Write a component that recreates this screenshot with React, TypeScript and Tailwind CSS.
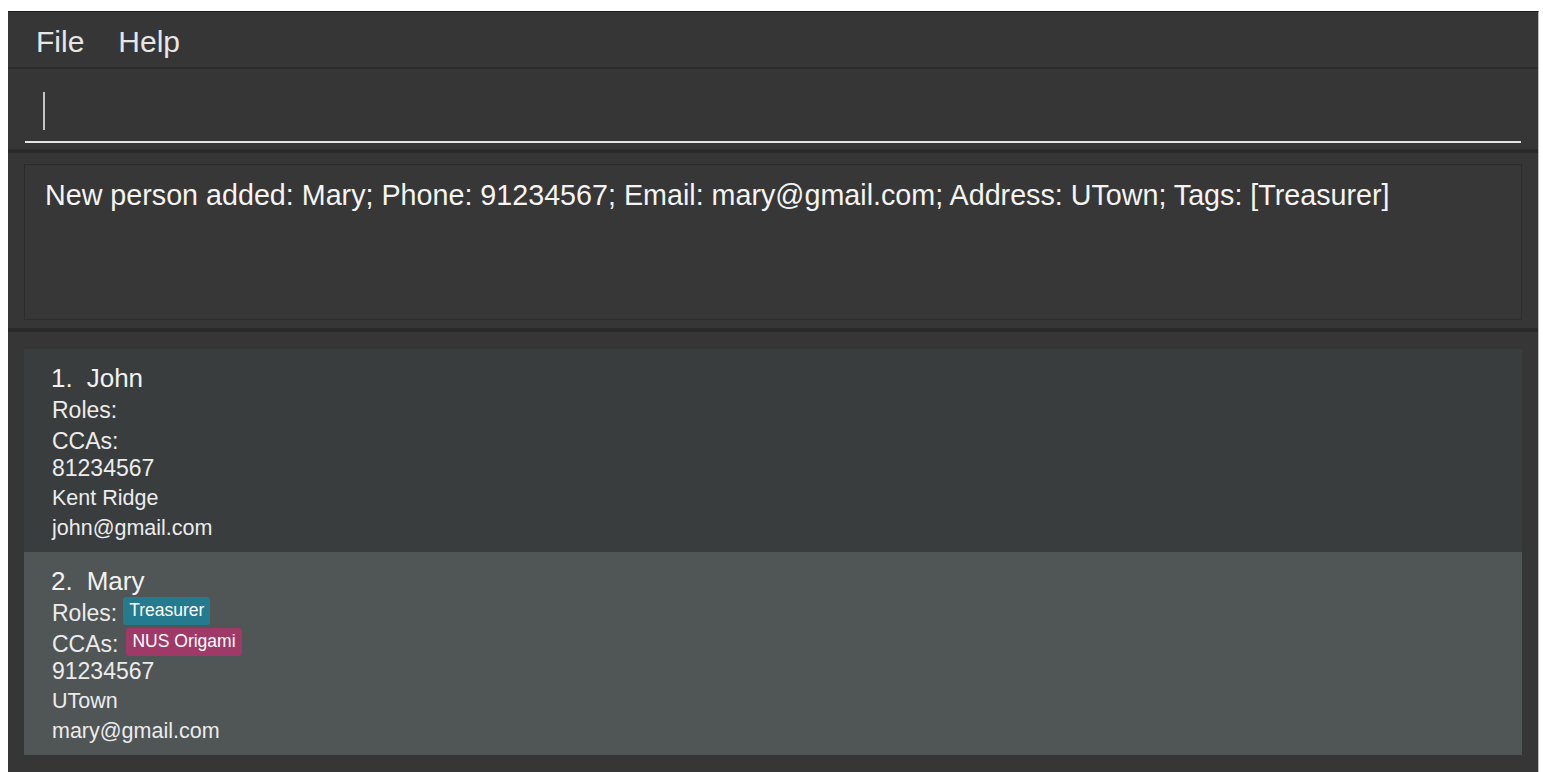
import React from 'react';

interface Person {
  index: number;
  name: string;
  role?: string;
  cca?: string;
  phone: string;
  address: string;
  email: string;
  bg: string;
}

const people: Person[] = [
  { index: 1, name: 'John', phone: '81234567', address: 'Kent Ridge', email: 'john@gmail.com', bg: 'bg-[#393d3e]' },
  {
    index: 2,
    name: 'Mary',
    role: 'Treasurer',
    cca: 'NUS Origami',
    phone: '91234567',
    address: 'UTown',
    email: 'mary@gmail.com',
    bg: 'bg-[#505556]',
  },
];

function PersonCard({ person }: { person: Person }) {
  return (
    <div className={`h-[203px] pl-[28px] pt-[13px] pb-[11px] flex flex-col text-[#ececec] ${person.bg}`}>
      {/* name */}
      <div className="h-[32px] flex items-center text-[26px] leading-none text-[#f2f2f2] -ml-[1px]">
        <span>{person.index}.</span>
        <span className="ml-[14px]">{person.name}</span>
      </div>
      <div className="h-[32px] flex items-center text-[23px] leading-none">
        <span>Roles:</span>
        {person.role && (
          <span className="ml-[6px] mb-[5px] h-[28px] px-[6px] rounded-[3px] bg-[#257b8e] text-[17.5px] text-white flex items-center">
            {person.role}
          </span>
        )}
      </div>
      <div className="h-[30px] flex items-center text-[23px] leading-none">
        <span>CCAs:</span>
        {person.cca && (
          <span className="ml-[8px] mb-[5px] h-[28px] px-[6px] rounded-[3px] bg-[#9f3968] text-[17.5px] text-white flex items-center">
            {person.cca}
          </span>
        )}
      </div>
      <div className="h-[25px] flex items-center text-[23px] leading-none">{person.phone}</div>
      <div className="h-[36px] flex items-center text-[21.5px] leading-none">{person.address}</div>
      <div className="h-[24px] flex items-center text-[21.5px] leading-none">{person.email}</div>
    </div>
  );
}

export default function App() {
  return (
    <div className="min-h-screen bg-white font-['Liberation_Sans',Arial,sans-serif] overflow-hidden">
      <div className="pl-[8px] pt-[11px]">
        <div className="w-[1531px] h-[761px] bg-[#363636] border-t border-t-[#1d1d1d] border-r border-r-[#bdbdbd] flex flex-col overflow-hidden">
          {/* menu bar */}
          <div className="h-[57px] shrink-0 pt-[4px] pl-[28px] flex items-center gap-[34px] text-[30px] leading-none text-[#e6e6e6] border-b-2 border-b-[#2c2c2c]">
            <span>File</span>
            <span>Help</span>
          </div>

          {/* command box */}
          <div className="h-[80px] shrink-0 px-[16px] pt-[23px]">
            <div className="ml-[19px] w-[2px] h-[38px] bg-[#c4c4c4]" />
            <div className="mt-[11px] mx-[1px] h-[2px] bg-[#e4e4e4]" />
          </div>

          <div className="h-[4px] shrink-0 bg-[#2a2a2a]" />

          {/* result display */}
          <div className="h-[175px] shrink-0 px-[16px] pt-[11px]">
            <div className="h-[156px] border border-[#2c2c2c] bg-[#373737] pt-[13px] pl-[20px] text-[28.7px] leading-[34px] text-[#f4f4f4] whitespace-nowrap">
              New person added: Mary; Phone: 91234567; Email: mary@gmail.com; Address: UTown; Tags: [Treasurer]
            </div>
          </div>

          <div className="h-[4px] shrink-0 bg-[#2a2a2a]" />

          {/* person list */}
          <div className="flex-1 px-[16px] pt-[17px] flex flex-col">
            {people.map((p) => (
              <PersonCard key={p.index} person={p} />
            ))}
          </div>
        </div>
      </div>
    </div>
  );
}
